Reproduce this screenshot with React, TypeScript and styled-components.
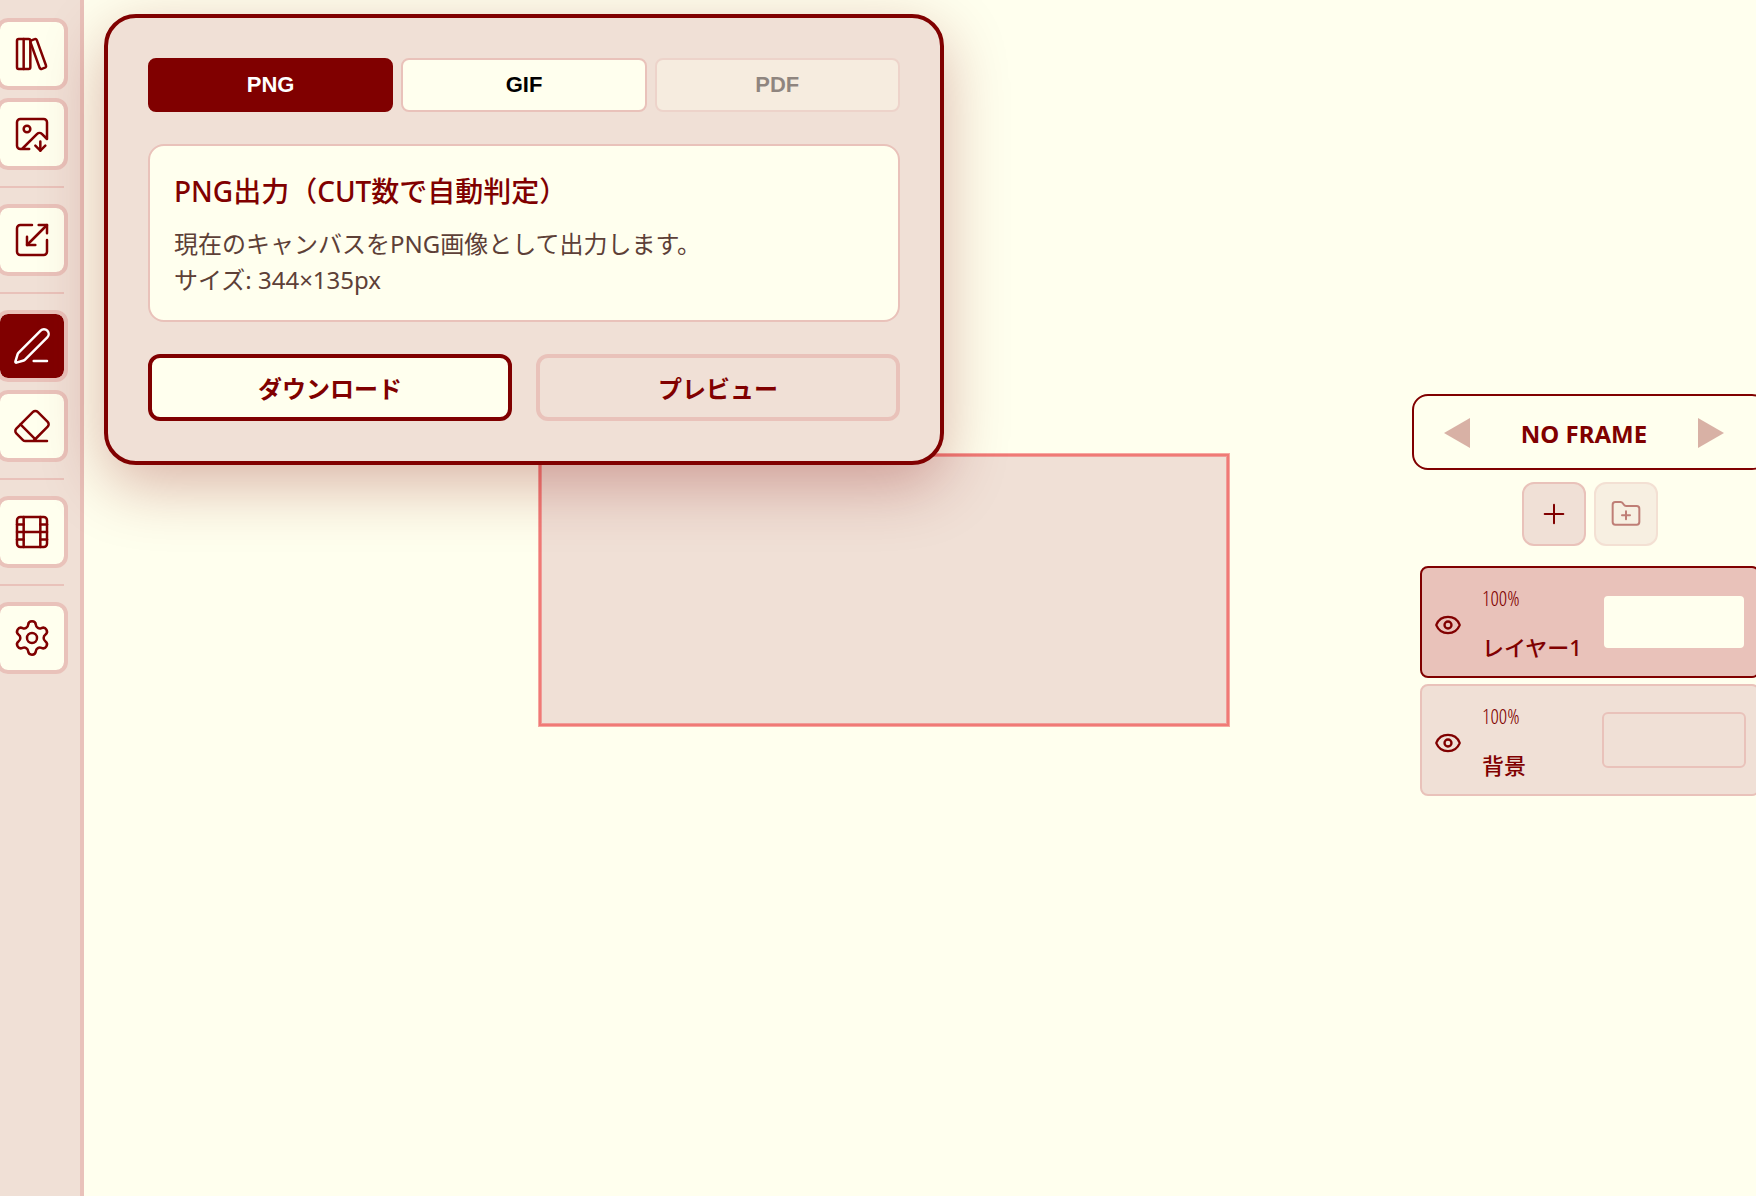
import React, { useState } from "react";
import styled, { createGlobalStyle } from "styled-components";
import {
  Eraser,
  Eye,
  Film,
  FolderPlus,
  ImageDown,
  LibraryBig,
  PenLine,
  Plus,
  Scaling,
  Settings,
} from "lucide-react";

const color = {
  maroon: "#800000",
  ground: "#ffffee",
  cream: "#f0e0d6",
  line: "#e9c2ba",
  text: "#5d4037",
};

const GlobalStyle = createGlobalStyle`
  *, *::before, *::after { box-sizing: border-box; }
  body {
    margin: 0;
    overflow: hidden;
    background: ${color.ground};
    color: ${color.maroon};
    font-family: "Noto Sans", "Noto Sans CJK JP", sans-serif;
  }
  button { margin: 0; cursor: pointer; }
  h2, p { margin: 0; }
`;

const Shell = styled.div`
  position: relative;
  display: flex;
  justify-content: space-between;
  height: 100vh;
  overflow: hidden;
`;

const Sidebar = styled.aside`
  width: 84px;
  flex: none;
  padding: 18px 0;
  background: ${color.cream};
  border-right: 4px solid ${color.line};
`;

const ToolList = styled.nav`
  display: flex;
  flex-direction: column;
  align-items: center;
  gap: 8px;
  width: 64px;
`;

const ToolButton = styled.button<{ $active?: boolean }>`
  display: grid;
  place-items: center;
  flex: none;
  width: 72px;
  height: 72px;
  padding: 0;
  border: 4px solid ${color.line};
  border-radius: 12px;
  background: ${(p) => (p.$active ? color.maroon : color.ground)};
  background-clip: padding-box;
  color: ${(p) => (p.$active ? "#ffffff" : color.maroon)};
`;

const Divider = styled.hr`
  width: 100%;
  height: 2px;
  margin: 8px 0;
  border: 0;
  background: ${color.line};
`;

const Stage = styled.main`
  position: absolute;
  inset: 0;
  z-index: -1;
  display: grid;
  place-items: center;
  padding: 0 0 16px 12px;
`;

const Canvas = styled.div`
  width: 690px;
  height: 272px;
  border: 2px solid #f07a76;
  background: ${color.cream};
  box-shadow:
    0 0 0 1px rgba(240, 110, 110, 0.6),
    inset 0 0 0 1px rgba(240, 110, 110, 0.6);
`;

const Dialog = styled.section`
  position: absolute;
  top: 14px;
  left: 104px;
  display: flex;
  flex-direction: column;
  gap: 32px;
  width: 840px;
  padding: 40px;
  border: 4px solid ${color.maroon};
  border-radius: 32px;
  background: ${color.cream};
  box-shadow: 0 20px 64px rgba(128, 0, 0, 0.3);
`;

const Tabs = styled.div`
  display: grid;
  grid-template-columns: repeat(3, 1fr);
  gap: 8px;
`;

const Tab = styled.button<{ $active?: boolean }>`
  height: 54px;
  padding: 0;
  border: 2px solid ${(p) => (p.$active ? color.maroon : color.line)};
  border-radius: 8px;
  background: ${(p) => (p.$active ? color.maroon : color.ground)};
  color: ${(p) => (p.$active ? "#ffffff" : "#000000")};
  font: bold 22px "Liberation Sans", sans-serif;
  &:disabled { opacity: 0.4; }
`;

const Info = styled.div`
  display: flex;
  flex-direction: column;
  gap: 14px;
  padding: 24px 24px 22px;
  border: 2px solid ${color.line};
  border-radius: 16px;
  background: ${color.ground};
`;

const InfoTitle = styled.h2`
  font-size: 28px;
  font-weight: 500;
  line-height: 42px;
`;

const InfoText = styled.p`
  color: ${color.text};
  font-size: 24px;
  line-height: 36px;
`;

const Actions = styled.div`
  display: grid;
  grid-template-columns: 1fr 1fr;
  gap: 24px;
`;

const ActionButton = styled.button<{ $primary?: boolean }>`
  padding: 13px 12px 11px;
  border: 4px solid ${(p) => (p.$primary ? color.maroon : color.line)};
  border-radius: 12px;
  background: ${(p) => (p.$primary ? color.ground : color.cream)};
  color: ${color.maroon};
  font-family: inherit;
  font-size: 24px;
  font-weight: 700;
  line-height: 35px;
`;

const LayerPanel = styled.aside`
  align-self: center;
  display: flex;
  flex-direction: column;
  width: 356px;
  margin-right: -12px;
`;

const FrameBar = styled.div`
  display: flex;
  align-items: center;
  justify-content: space-between;
  height: 76px;
  padding: 2px 42px 0 30px;
  border: 2px solid ${color.maroon};
  border-radius: 16px;
  font-size: 24px;
  font-weight: 700;
`;

const FrameArrow = styled.button`
  display: flex;
  padding: 0;
  border: 0;
  background: none;
  color: ${color.maroon};
  &:disabled { opacity: 0.3; }
`;

const LayerTools = styled.div`
  display: flex;
  justify-content: center;
  gap: 8px;
  margin: 12px 0 20px;
`;

const LayerTool = styled.button`
  display: grid;
  place-items: center;
  width: 64px;
  height: 64px;
  padding: 0;
  border: 2px solid ${color.line};
  border-radius: 12px;
  background: ${color.cream};
  color: ${color.maroon};
  &:disabled { opacity: 0.5; }
`;

const Layers = styled.ul`
  margin: 0;
  padding: 0 8px;
  list-style: none;
`;

const LayerRow = styled.li<{ $selected?: boolean }>`
  display: grid;
  grid-template-columns: 28px 1fr 144px;
  align-items: center;
  column-gap: 20px;
  height: 112px;
  margin-bottom: 6px;
  padding: 0 12px;
  border: 2px solid ${(p) => (p.$selected ? color.maroon : color.line)};
  border-radius: 8px;
  background: ${(p) => (p.$selected ? color.line : color.cream)};
`;

const EyeButton = styled.button`
  display: flex;
  padding: 6px 0 0;
  border: 0;
  background: none;
  color: ${color.maroon};
`;

const LayerText = styled.div`
  display: flex;
  flex-direction: column;
  gap: 20px;
  padding-top: 4px;
  white-space: nowrap;
`;

const Opacity = styled.span`
  font-family: "Open Sans Condensed Light", "Noto Sans", sans-serif;
  font-size: 21px;
  line-height: 26px;
`;

const LayerName = styled.span`
  font-size: 22px;
  font-weight: 500;
  line-height: 32px;
`;

const Thumb = styled.div<{ $blank?: boolean }>`
  height: 56px;
  border: 2px solid ${color.line};
  border-radius: 6px;
  background: ${(p) => (p.$blank ? color.ground : color.cream)};
`;

const toolGroups = [
  [
    { id: "library", label: "アルバム", Icon: LibraryBig },
    { id: "export", label: "画像出力", Icon: ImageDown },
  ],
  [{ id: "resize", label: "リサイズ", Icon: Scaling }],
  [
    { id: "pen", label: "ペン", Icon: PenLine },
    { id: "eraser", label: "消しゴム", Icon: Eraser },
  ],
  [{ id: "film", label: "アニメーション", Icon: Film }],
  [{ id: "settings", label: "設定", Icon: Settings }],
];

const layers = [
  { name: "レイヤー1", opacity: "100%", blank: true },
  { name: "背景", opacity: "100%", blank: false },
];

export default function App() {
  const [tool, setTool] = useState("pen");
  const [format, setFormat] = useState("PNG");
  const [selected, setSelected] = useState(0);

  return (
    <>
      <GlobalStyle />
      <Shell>
        <Stage>
          <Canvas />
        </Stage>
        <Sidebar>
          <ToolList>
            {toolGroups.map((group, i) => (
              <React.Fragment key={i}>
                {i > 0 && <Divider />}
                {group.map(({ id, label, Icon }) => (
                  <ToolButton key={id} aria-label={label} $active={tool === id} onClick={() => setTool(id)}>
                    <Icon size={40} strokeWidth={1.5} />
                  </ToolButton>
                ))}
              </React.Fragment>
            ))}
          </ToolList>
        </Sidebar>
        <LayerPanel>
          <FrameBar>
            <FrameArrow disabled aria-label="前のフレーム">
              <svg width="26" height="30" viewBox="0 0 26 30" fill="currentColor">
                <path d="M26 0v30L0 15z" />
              </svg>
            </FrameArrow>
            <span>NO FRAME</span>
            <FrameArrow disabled aria-label="次のフレーム">
              <svg width="26" height="30" viewBox="0 0 26 30" fill="currentColor">
                <path d="M0 0v30l26-15z" />
              </svg>
            </FrameArrow>
          </FrameBar>
          <LayerTools>
            <LayerTool aria-label="レイヤー追加">
              <Plus size={32} strokeWidth={1.5} />
            </LayerTool>
            <LayerTool aria-label="フォルダ追加" disabled>
              <FolderPlus size={32} strokeWidth={1.5} />
            </LayerTool>
          </LayerTools>
          <Layers>
            {layers.map((layer, i) => (
              <LayerRow key={layer.name} $selected={selected === i} onClick={() => setSelected(i)}>
                <EyeButton aria-label="表示切替">
                  <Eye size={28} strokeWidth={2} />
                </EyeButton>
                <LayerText>
                  <Opacity>{layer.opacity}</Opacity>
                  <LayerName>{layer.name}</LayerName>
                </LayerText>
                <Thumb $blank={layer.blank} />
              </LayerRow>
            ))}
          </Layers>
        </LayerPanel>
        <Dialog role="dialog" aria-label="出力">
          <Tabs role="tablist">
            {["PNG", "GIF", "PDF"].map((f) => (
              <Tab
                key={f}
                role="tab"
                aria-selected={format === f}
                disabled={f === "PDF"}
                $active={format === f}
                onClick={() => setFormat(f)}
              >
                {f}
              </Tab>
            ))}
          </Tabs>
          <Info>
            <InfoTitle>PNG出力（CUT数で自動判定）</InfoTitle>
            <InfoText>
              現在のキャンバスをPNG画像として出力します。
              <br />
              サイズ: 344×135px
            </InfoText>
          </Info>
          <Actions>
            <ActionButton $primary>ダウンロード</ActionButton>
            <ActionButton>プレビュー</ActionButton>
          </Actions>
        </Dialog>
      </Shell>
    </>
  );
}
